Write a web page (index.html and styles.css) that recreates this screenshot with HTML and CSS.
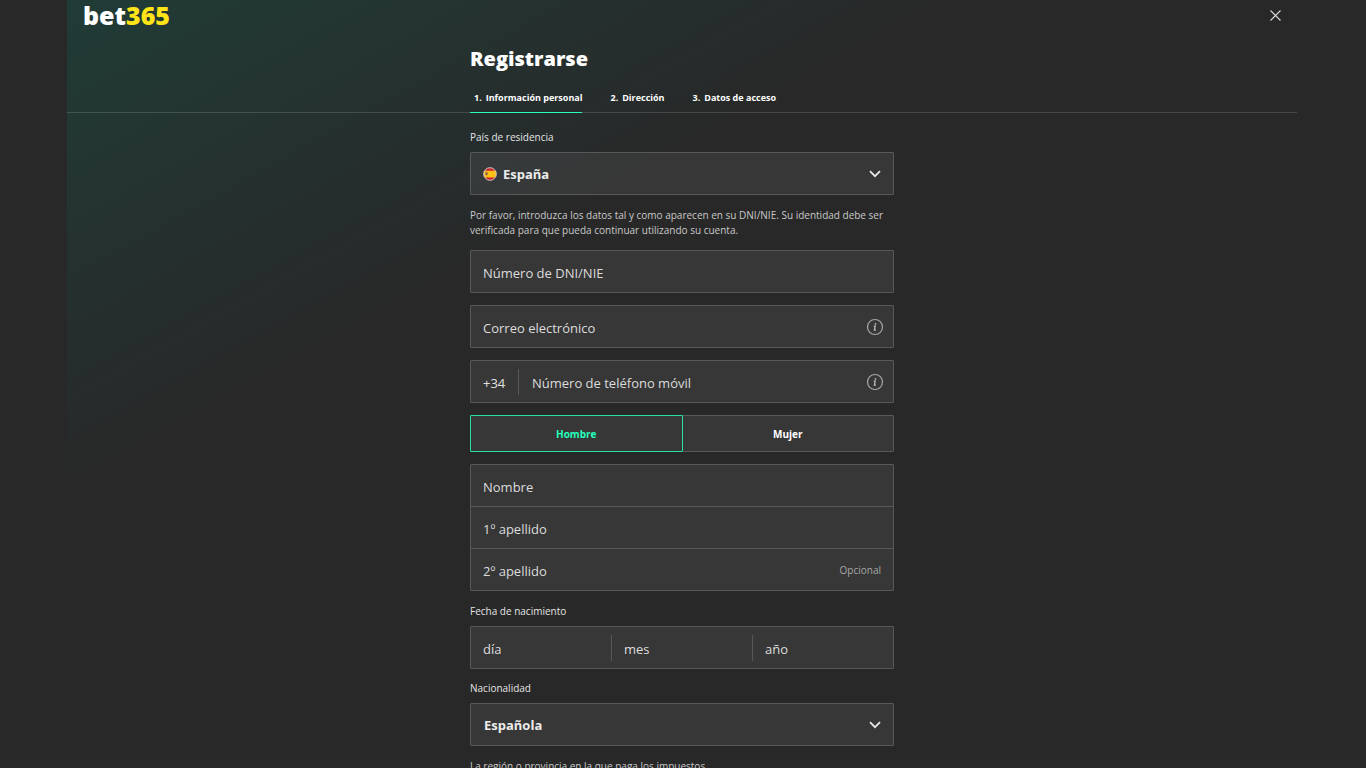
FILE: index.html
```html
<!DOCTYPE html>
<html lang="es">
<head>
<meta charset="utf-8">
<meta name="viewport" content="width=device-width, initial-scale=1">
<title>bet365 - Registrarse</title>
<link rel="stylesheet" href="styles.css">
</head>
<body>
<div class="page">
  <div class="shell">
    <header class="top">
      <a class="logo" href="#" aria-label="bet365">bet<span class="logo-num">365</span></a>
      <button class="close" type="button" aria-label="Cerrar">
        <svg width="11" height="11" viewBox="0 0 11 11" fill="none" stroke="#d8d8d8" stroke-width="1.1"><path d="M.5.5l10 10M10.500.5L.5 10.500"/></svg>
      </button>
    </header>
    <div class="intro">
      <div class="column">
        <h1 class="title">Registrarse</h1>
        <nav class="steps">
          <a class="step step-active" href="#personal"><span>1.</span><span>Información personal</span></a>
          <a class="step" href="#direccion"><span>2.</span><span>Dirección</span></a>
          <a class="step" href="#acceso"><span>3.</span><span>Datos de acceso</span></a>
        </nav>
      </div>
    </div>
    <form class="column form" id="personal">
      <label class="label" for="country">País de residencia</label>
      <div class="field">
        <svg class="flag" width="14" height="14" viewBox="0 0 14 14" aria-hidden="true">
          <defs><clipPath id="disc"><circle cx="7" cy="7" r="6.2"/></clipPath></defs>
          <g clip-path="url(#disc)"><path fill="#c8202b" d="M0 0h14v14H0z"/><path fill="#fbc213" d="M0 3.8h14v6.800H0z"/><path fill="#a4713c" d="M2.300 5.300h2.400v2.400L3.500 8.500 2.300 7.700z"/><path fill="#6d567a" d="M2.900 6h1.200v1.300H2.900z"/></g>
          <circle cx="7" cy="7" r="6.3" fill="none" stroke="#e1dcd8" stroke-width=".9"/>
        </svg>
        <select class="control select select-flag" id="country"><option>España</option></select>
        <svg class="chevron" width="12" height="8" viewBox="0 0 12 8" fill="none" stroke="#e6e6e6" stroke-width="1.8"><path d="M1 1.2l5 5 5-5"/></svg>
      </div>
      <p class="help">Por favor, introduzca los datos tal y como aparecen en su DNI/NIE. Su identidad debe ser verificada para que pueda continuar utilizando su cuenta.</p>
      <div class="stack">
        <div class="field"><input class="control" type="text" placeholder="Número de DNI/NIE" aria-label="Número de DNI/NIE"></div>
        <div class="field">
          <input class="control" type="email" placeholder="Correo electrónico" aria-label="Correo electrónico">
          <button class="info" type="button" aria-label="Información sobre el correo electrónico">
            <svg width="18" height="18" viewBox="0 0 18 18"><circle cx="9" cy="9" r="7.5" fill="none" stroke="#a8a8a8" stroke-width="1.2"/><circle cx="9.500" cy="5.900" r=".9" fill="#b8b8b8"/><path d="M7.700 8.200h1.500l-.8 4h1.600" fill="none" stroke="#b8b8b8" stroke-width="1.3"/></svg>
          </button>
        </div>
        <div class="field">
          <input class="control prefix" type="text" value="+34" aria-label="Prefijo">
          <input class="control phone" type="tel" placeholder="Número de teléfono móvil" aria-label="Número de teléfono móvil">
          <button class="info" type="button" aria-label="Información sobre el teléfono">
            <svg width="18" height="18" viewBox="0 0 18 18"><circle cx="9" cy="9" r="7.5" fill="none" stroke="#a8a8a8" stroke-width="1.2"/><circle cx="9.500" cy="5.900" r=".9" fill="#b8b8b8"/><path d="M7.700 8.200h1.500l-.8 4h1.600" fill="none" stroke="#b8b8b8" stroke-width="1.3"/></svg>
          </button>
        </div>
        <div class="toggle">
          <button class="choice choice-on" type="button" aria-pressed="true">Hombre</button>
          <button class="choice" type="button" aria-pressed="false">Mujer</button>
        </div>
        <div class="group">
          <div class="row"><input class="control" type="text" placeholder="Nombre" aria-label="Nombre"></div>
          <div class="row"><input class="control" type="text" placeholder="1º apellido" aria-label="1º apellido"></div>
          <div class="row"><input class="control" type="text" placeholder="2º apellido" aria-label="2º apellido"><span class="optional">Opcional</span></div>
        </div>
      </div>
      <label class="label" for="day">Fecha de nacimiento</label>
      <div class="field date">
        <input class="control part" id="day" type="text" placeholder="día">
        <input class="control part" type="text" placeholder="mes" aria-label="mes">
        <input class="control part" type="text" placeholder="año" aria-label="año">
      </div>
      <label class="label" for="nationality">Nacionalidad</label>
      <div class="field">
        <select class="control select" id="nationality"><option>Española</option></select>
        <svg class="chevron" width="12" height="8" viewBox="0 0 12 8" fill="none" stroke="#e6e6e6" stroke-width="1.8"><path d="M1 1.2l5 5 5-5"/></svg>
      </div>
      <p class="help">La región o provincia en la que paga los impuestos</p>
    </form>
  </div>
</div>
</body>
</html>
```
FILE: styles.css
```css
* { box-sizing: border-box; }

body {
  margin: 0;
  background: #282828;
  color: #fff;
  font-family: "Open Sans", "Noto Sans", sans-serif;
  font-size: 13px;
}

button, input, select { font: inherit; color: inherit; margin: 0; }
button { padding: 0; border: 0; background: none; cursor: pointer; }
a { color: inherit; text-decoration: none; }

.page {
  height: 100vh;
  overflow-y: auto;
  scrollbar-width: none;
  padding-right: 2px;
}

.shell {
  max-width: 1230px;
  margin: 0 auto;
  background: linear-gradient(151deg, #203b36 0, #243531 160px, #262d2d 320px, #282828 430px);
}

.column {
  width: 100%;
  max-width: 424px;
  margin: 0 auto;
}

.top {
  display: flex;
  align-items: center;
  justify-content: space-between;
  height: 30px;
  padding: 0 16px;
}

.logo {
  font-family: "Noto Sans", sans-serif;
  font-size: 25px;
  font-weight: 900;
  line-height: 30px;
}
.logo-num { color: #ffe418; }

.close { display: flex; }

.intro { border-bottom: 1px solid rgba(255, 255, 255, .14); }

.title {
  margin: 0;
  padding-top: 14px;
  font-size: 20px;
  font-weight: 800;
  line-height: 30px;
}

.steps {
  display: flex;
  gap: 24px;
  margin: 10px 0 -1px;
}

.step {
  display: flex;
  gap: 4px;
  padding: 6px 0 7px 4px;
  border-bottom: 1px solid transparent;
  font-size: 9px;
  font-weight: 700;
  line-height: 15px;
}
.step-active { border-color: #26ffbe; }

.form { padding-top: 17px; }

.label {
  display: block;
  padding-bottom: 7px;
  font-size: 10px;
  line-height: 15px;
  color: #e4e4e4;
}

.help {
  margin: 13px 0 12px;
  font-size: 10px;
  line-height: 15px;
  color: #c8c8c8;
}

.stack {
  display: flex;
  flex-direction: column;
  gap: 12px;
  margin-bottom: 13px;
}

.field, .group, .toggle {
  border: 1px solid #585858;
  border-radius: 1px;
  background: rgba(255, 255, 255, .07);
}

.field {
  display: flex;
  align-items: center;
  position: relative;
  height: 43px;
}
.field + .label { margin-top: 12px; }

.control {
  flex: 1;
  min-width: 0;
  height: 41px;
  padding: 2px 12px 0;
  border: 0;
  outline: 0;
  background: transparent;
  color: #e0e0e0;
}
.control::placeholder { color: #dcdcdc; opacity: 1; }

.select {
  appearance: none;
  padding-top: 0;
  padding-left: 13px;
  font-weight: 700;
  color: #ececec;
}
.select-flag { padding-left: 32px; }
.select option { background: #383838; }

.flag, .chevron { position: absolute; pointer-events: none; }
.flag { left: 12px; }
.chevron { right: 12px; }

.info { display: flex; margin-right: 9px; }

.prefix {
  flex: 0 0 48px;
  height: 26px;
  padding-right: 0;
  border-right: 1px solid #585858;
}
.phone { padding-left: 13px; }

.toggle { display: flex; height: 37px; }
.choice {
  flex: 1;
  font-size: 10px;
  font-weight: 700;
}
.choice-on {
  margin: -1px 0 -1px -1px;
  border: 1px solid #26e0a6;
  border-radius: 1px;
  color: #26ffbe;
}

.row { display: flex; align-items: center; }
.row + .row { border-top: 1px solid #585858; }
.optional {
  padding-right: 12px;
  font-size: 10px;
  color: #a8a8a8;
}

.part { height: 26px; }
.part + .part { border-left: 1px solid #585858; }
```
